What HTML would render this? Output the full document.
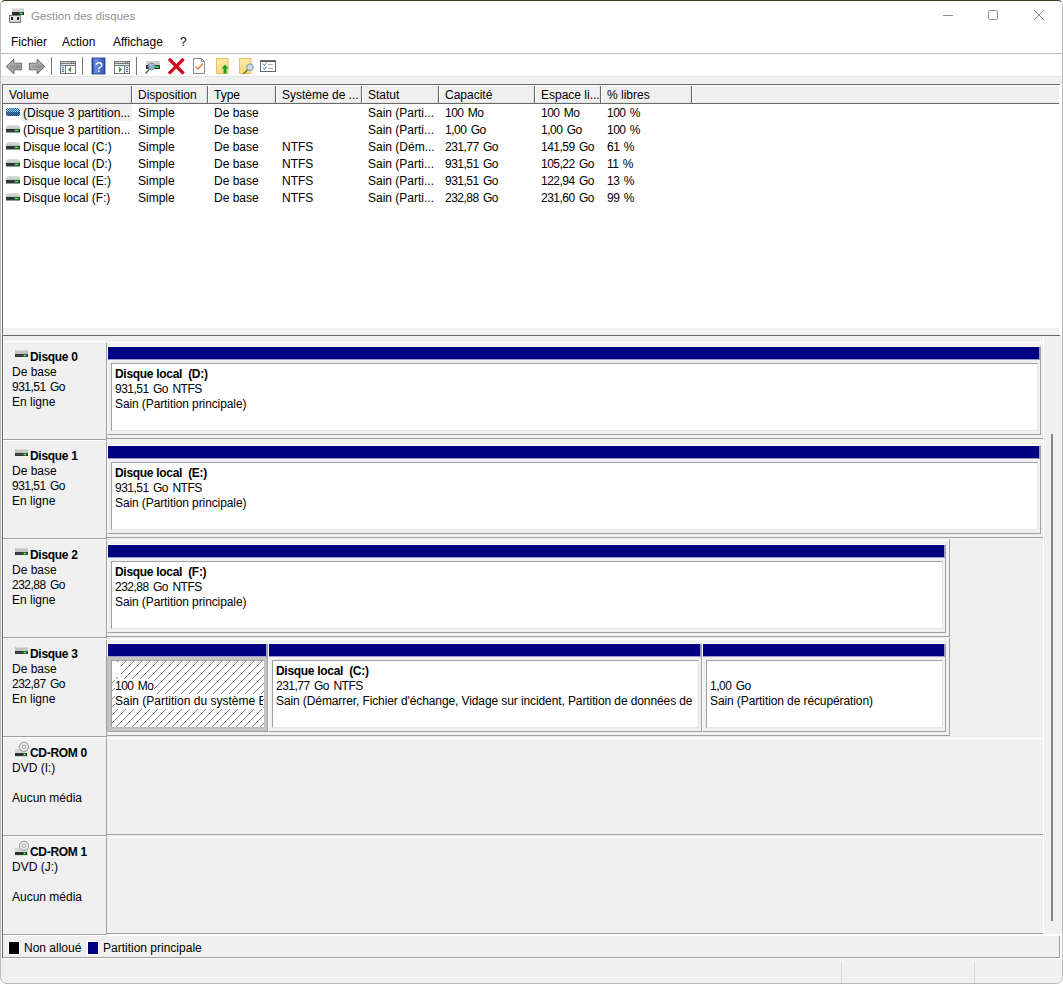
<!DOCTYPE html>
<html><head><meta charset="utf-8">
<style>
*{margin:0;padding:0;box-sizing:border-box}
html,body{width:1063px;height:984px;overflow:hidden;background:#fff}
body{position:relative;font-family:"Liberation Sans",sans-serif;font-size:12px;color:#000;line-height:15px}
.a{position:absolute}
.t{position:absolute;white-space:pre;line-height:15px}
.b{font-weight:bold;letter-spacing:-0.3px}
.n{letter-spacing:-0.5px;word-spacing:1.5px}
.hl{position:absolute;height:1px}
.vl{position:absolute;width:1px}
.ico-drv{width:14px;height:8px;background:linear-gradient(#dcdcdc 0,#c2c2c2 4px,#2e2e2e 4px,#3a3a3a 7px,#9a9a9a 7px);border-radius:3px 3px 0 0}
.ico-drv::after{content:"";position:absolute;left:9px;top:5px;width:3px;height:1px;background:#5fe26a;box-shadow:0 0 0 1px #1f6a28}
.ico-vol{width:14px;height:8px;background:linear-gradient(transparent 4px,rgba(10,50,110,.55) 4px),conic-gradient(#1f5c98 25%,#a6d8fc 0 50%,#1f5c98 0 75%,#a6d8fc 0);background-size:auto,2px 2px;border-radius:2px}
.bar{background:#000080;box-shadow:inset -1px -1px 0 #9a9ac8}
.hatch{border:4px solid #c3c3c3;background-color:#fff;background-image:repeating-linear-gradient(-45deg,transparent 0,transparent 4.6px,#8a8a8a 4.6px,#8a8a8a 5.66px)}
.ico-cd{width:15px;height:15px}
</style></head><body>
<!-- window frame -->
<div class="a" style="left:0;top:0;width:1063px;height:984px;background:#fff;border-top:1px solid #3b3627;border-left:1px solid #bdbdbd;border-right:1px solid #bdbdbd;border-bottom:1px solid #b8b8b8;border-radius:5px 5px 7px 7px"></div>
<!-- title icon -->
<svg class="a" style="left:8px;top:7px" width="18" height="17" viewBox="8 7 18 17" shape-rendering="crispEdges">
<rect x="12" y="8" width="12" height="4" fill="#d2d2d2"/>
<rect x="13" y="8" width="10" height="1" fill="#e8e8e8"/>
<rect x="12" y="12" width="12" height="3" fill="#2e2e2e"/>
<rect x="19" y="12" width="4" height="3" fill="#1d6e26"/>
<rect x="20" y="13" width="2" height="1" fill="#8cf08f"/>
<rect x="9" y="15" width="12" height="8" fill="#7a7a7a"/>
<rect x="10" y="16" width="10" height="6" fill="#e2e2e2"/>
<rect x="10" y="21" width="10" height="1" fill="#c8c8c8"/>
<rect x="11" y="17" width="2" height="3" fill="#1e1e1e"/>
<rect x="17" y="17" width="2" height="3" fill="#1e1e1e"/>
</svg>
<!-- window controls -->
<svg class="a" style="left:935px;top:5px" width="120" height="20" viewBox="935 5 120 20">
<rect x="943" y="15" width="10" height="1" fill="#8e8e8e" shape-rendering="crispEdges"/>
<rect x="988.5" y="10.5" width="9" height="9" rx="1.2" fill="none" stroke="#8e8e8e" stroke-width="1"/>
<path d="M1034 10 L1044 20 M1044 10 L1034 20" stroke="#8e8e8e" stroke-width="1"/>
</svg>
<!-- title -->
<div class="t" style="left:31px;top:9px;font-size:11.5px;color:#929292">Gestion des disques</div>

<!-- menu -->
<div class="t" style="left:11px;top:35px">Fichier</div>
<div class="t" style="left:62px;top:35px">Action</div>
<div class="t" style="left:113px;top:35px">Affichage</div>
<div class="t" style="left:180px;top:35px">?</div>
<div class="hl" style="left:1px;top:53px;width:1061px;background:#b8b8b8"></div>

<!-- toolbar icons -->
<svg class="a" style="left:0;top:54px" width="290" height="22" viewBox="0 54 290 22" shape-rendering="geometricPrecision">
<defs>
<linearGradient id="ag" x1="0" y1="0" x2="1" y2="1"><stop offset="0" stop-color="#b0b0b0"/><stop offset="1" stop-color="#7c7c7c"/></linearGradient>
<linearGradient id="hg" x1="0" y1="0" x2="1" y2="0"><stop offset="0" stop-color="#1d3f9c"/><stop offset="0.25" stop-color="#6f8fe0"/><stop offset="1" stop-color="#3556b8"/></linearGradient>
<linearGradient id="yg" x1="0" y1="0" x2="0" y2="1"><stop offset="0" stop-color="#fde9a8"/><stop offset="1" stop-color="#f9d978"/></linearGradient>
</defs>
<!-- back arrow -->
<path d="M6.2 66.5 L13.8 59.2 L13.8 63.2 L21.6 63.2 L21.6 69.8 L13.8 69.8 L13.8 73.8 Z" fill="url(#ag)" stroke="#606060" stroke-width="1" stroke-linejoin="round"/><path d="M7.9 66.5 L12.9 61.6 L12.9 64.1 L20.7 64.1 L20.7 68.9 L12.9 68.9 L12.9 71.4 Z" fill="none" stroke="#cfcfcf" stroke-width="0.7" stroke-linejoin="round" opacity="0.8"/>
<!-- forward arrow -->
<path d="M44.8 66.5 L37.2 59.2 L37.2 63.2 L29.4 63.2 L29.4 69.8 L37.2 69.8 L37.2 73.8 Z" fill="url(#ag)" stroke="#606060" stroke-width="1" stroke-linejoin="round"/><path d="M43.1 66.5 L38.1 61.6 L38.1 64.1 L30.3 64.1 L30.3 68.9 L38.1 68.9 L38.1 71.4 Z" fill="none" stroke="#cfcfcf" stroke-width="0.7" stroke-linejoin="round" opacity="0.8"/>
<!-- separators -->
<rect x="51" y="57" width="1" height="18" fill="#7a7a7a"/>
<rect x="82" y="57" width="1" height="18" fill="#7a7a7a"/>
<rect x="136" y="57" width="1" height="18" fill="#7a7a7a"/>
<!-- console tree icon -->
<g shape-rendering="crispEdges"><rect x="60" y="61" width="16" height="13" fill="#777"/><rect x="61" y="62" width="14" height="1" fill="#d4d4d4"/><rect x="71" y="62" width="1" height="1" fill="#777"/><rect x="73" y="62" width="1" height="1" fill="#777"/><rect x="61" y="64" width="14" height="1" fill="#dde3ea"/><rect x="61" y="66" width="4" height="7" fill="#e6f0fa"/><rect x="66" y="66" width="9" height="7" fill="#fbfffa"/><rect x="62" y="67" width="2" height="1" fill="#4f6a8a"/><rect x="62" y="69" width="2" height="1" fill="#4f6a8a"/><rect x="62" y="71" width="2" height="1" fill="#4f6a8a"/></g><path d="M68 69.5 L71 66.5 L71 72.5 Z" fill="#3c9a3c"/>
<!-- help -->
<rect x="92" y="58" width="13" height="16" fill="url(#hg)"/>
<rect x="92" y="58" width="13" height="16" fill="none" stroke="#1a3a8a" stroke-width="0.8"/>
<text x="99" y="72" font-family="Liberation Sans" font-size="14" fill="#fff" text-anchor="middle">?</text>
<!-- action pane icon -->
<g shape-rendering="crispEdges"><rect x="114" y="61" width="16" height="13" fill="#777"/><rect x="115" y="62" width="14" height="1" fill="#d4d4d4"/><rect x="125" y="62" width="1" height="1" fill="#777"/><rect x="127" y="62" width="1" height="1" fill="#777"/><rect x="115" y="64" width="14" height="1" fill="#dde3ea"/><rect x="125" y="66" width="4" height="7" fill="#e6f0fa"/><rect x="115" y="66" width="9" height="7" fill="#fbfffa"/><rect x="126" y="67" width="2" height="1" fill="#4f6a8a"/><rect x="126" y="69" width="2" height="1" fill="#4f6a8a"/><rect x="126" y="71" width="2" height="1" fill="#4f6a8a"/></g><path d="M122 69.5 L119 66.5 L119 72.5 Z" fill="#3c9a3c"/>
<!-- drive with magnifier -->
<rect x="146" y="61" width="14" height="4" rx="1" fill="#cfcfcf"/>
<rect x="146" y="65" width="14" height="4" fill="#333"/>
<rect x="155" y="66" width="4" height="2" fill="#2fc23a"/>
<line x1="145.5" y1="73.5" x2="149.5" y2="69" stroke="#555" stroke-width="1.2"/>
<circle cx="151.5" cy="66.5" r="3.3" fill="#a9c8e4" fill-opacity="0.85" stroke="#6a8aa8" stroke-width="1"/>
<!-- red X -->
<path d="M170 60 L182.5 72.5 M182.5 60 L170 72.5" stroke="#d3071a" stroke-width="3.2" stroke-linecap="square"/>
<!-- doc check -->
<path d="M193.5 58.5 L201.5 58.5 L204.5 61.5 L204.5 73.5 L193.5 73.5 Z" fill="#fff" stroke="#8a8a8a" stroke-width="1"/>
<path d="M201.5 58.5 L201.5 61.5 L204.5 61.5" fill="none" stroke="#8a8a8a" stroke-width="1"/>
<path d="M195.5 66.5 L198 69 L203 63.5" fill="none" stroke="#e8773d" stroke-width="1.4"/>
<!-- yellow doc with arrow -->
<rect x="216.5" y="58.5" width="11.5" height="15" fill="url(#yg)" stroke="#e6c35c" stroke-width="1"/>
<path d="M225 64.5 L228.5 68.5 L226.5 68.5 L226.5 73.5 L223.5 73.5 L223.5 68.5 L221.5 68.5 Z" fill="#1fa323"/>
<!-- yellow doc with magnifier -->
<rect x="239.5" y="58.5" width="11.5" height="15" fill="url(#yg)" stroke="#e6c35c" stroke-width="1"/>
<line x1="243.5" y1="73.8" x2="247.8" y2="69.5" stroke="#555" stroke-width="1.2"/>
<circle cx="250" cy="67.2" r="3.3" fill="#c9dde8" stroke="#7a9aac" stroke-width="1"/>
<!-- list checks -->
<g shape-rendering="crispEdges">
<rect x="260.5" y="60.5" width="15" height="11" fill="#fff" stroke="#6a6a6a"/>
<rect x="261" y="61" width="14" height="1" fill="#555"/>
<rect x="268" y="64" width="5" height="1" fill="#b0b0b0"/>
<rect x="268" y="68" width="5" height="1" fill="#b0b0b0"/>
</g>
<path d="M263 63.5 L264.5 65.5 L266.5 62.5 M263 67.5 L264.5 69.5 L266.5 66.5" fill="none" stroke="#3f7fd0" stroke-width="1"/>
</svg>

<!-- toolbar band -->
<div class="hl" style="left:1px;top:76px;width:1061px;background:#e3e3e3"></div>
<div class="a" style="left:1px;top:77px;width:1061px;height:7px;background:#f0f0f0"></div>

<!-- list view -->
<div class="a" style="left:2px;top:84px;width:1058px;height:251px;background:#fff;border-top:1px solid #696969;border-left:1px solid #696969"></div>
<div class="a" id="hdr" style="left:3px;top:85px;width:1056px;height:19px;background:#f0f0f0;border-bottom:1px solid #696969"></div>

<!-- list content -->
<div class="vl" style="left:131px;top:85px;height:18px;background:#696969"></div>
<div class="vl" style="left:207px;top:85px;height:18px;background:#696969"></div>
<div class="vl" style="left:275px;top:85px;height:18px;background:#696969"></div>
<div class="vl" style="left:361px;top:85px;height:18px;background:#696969"></div>
<div class="vl" style="left:438px;top:85px;height:18px;background:#696969"></div>
<div class="vl" style="left:534px;top:85px;height:18px;background:#696969"></div>
<div class="vl" style="left:600px;top:85px;height:18px;background:#696969"></div>
<div class="vl" style="left:691px;top:85px;height:18px;background:#696969"></div>
<div class="vl" style="left:3px;top:85px;height:18px;background:#fff"></div>
<div class="vl" style="left:132px;top:85px;height:18px;background:#fff"></div>
<div class="vl" style="left:208px;top:85px;height:18px;background:#fff"></div>
<div class="vl" style="left:276px;top:85px;height:18px;background:#fff"></div>
<div class="vl" style="left:362px;top:85px;height:18px;background:#fff"></div>
<div class="vl" style="left:439px;top:85px;height:18px;background:#fff"></div>
<div class="vl" style="left:535px;top:85px;height:18px;background:#fff"></div>
<div class="vl" style="left:601px;top:85px;height:18px;background:#fff"></div>
<div class="vl" style="left:692px;top:85px;height:18px;background:#fff"></div>
<div class="hl" style="left:3px;top:85px;width:1056px;background:#fff"></div>
<div class="hl" style="left:4px;top:102px;width:127px;background:#e3e3e3"></div>
<div class="vl" style="left:130px;top:86px;height:17px;background:#e3e3e3"></div>
<div class="hl" style="left:133px;top:102px;width:74px;background:#e3e3e3"></div>
<div class="vl" style="left:206px;top:86px;height:17px;background:#e3e3e3"></div>
<div class="hl" style="left:209px;top:102px;width:66px;background:#e3e3e3"></div>
<div class="vl" style="left:274px;top:86px;height:17px;background:#e3e3e3"></div>
<div class="hl" style="left:277px;top:102px;width:84px;background:#e3e3e3"></div>
<div class="vl" style="left:360px;top:86px;height:17px;background:#e3e3e3"></div>
<div class="hl" style="left:363px;top:102px;width:75px;background:#e3e3e3"></div>
<div class="vl" style="left:437px;top:86px;height:17px;background:#e3e3e3"></div>
<div class="hl" style="left:440px;top:102px;width:94px;background:#e3e3e3"></div>
<div class="vl" style="left:533px;top:86px;height:17px;background:#e3e3e3"></div>
<div class="hl" style="left:536px;top:102px;width:64px;background:#e3e3e3"></div>
<div class="vl" style="left:599px;top:86px;height:17px;background:#e3e3e3"></div>
<div class="hl" style="left:602px;top:102px;width:89px;background:#e3e3e3"></div>
<div class="vl" style="left:690px;top:86px;height:17px;background:#e3e3e3"></div>
<div class="t" style="left:9px;top:88px">Volume</div>
<div class="t" style="left:138px;top:88px">Disposition</div>
<div class="t" style="left:214px;top:88px">Type</div>
<div class="t" style="left:282px;top:88px">Système de ...</div>
<div class="t" style="left:368px;top:88px">Statut</div>
<div class="t" style="left:445px;top:88px">Capacité</div>
<div class="t" style="left:541px;top:88px">Espace li...</div>
<div class="t" style="left:607px;top:88px">% libres</div>
<div class="a" style="left:21px;top:104px;width:111px;height:17px;background:#f0f0f0"></div>
<div class="t" style="left:23px;top:106px">(Disque 3 partition...</div>
<div class="t" style="left:138px;top:106px">Simple</div>
<div class="t" style="left:214px;top:106px">De base</div>
<div class="t" style="left:368px;top:106px">Sain (Parti...</div>
<div class="t n" style="left:445px;top:106px">100 Mo</div>
<div class="t n" style="left:541px;top:106px">100 Mo</div>
<div class="t n" style="left:607px;top:106px">100 %</div>
<div class="a ico-vol" style="left:6px;top:108px"></div>
<div class="t" style="left:23px;top:123px">(Disque 3 partition...</div>
<div class="t" style="left:138px;top:123px">Simple</div>
<div class="t" style="left:214px;top:123px">De base</div>
<div class="t" style="left:368px;top:123px">Sain (Parti...</div>
<div class="t n" style="left:445px;top:123px">1,00 Go</div>
<div class="t n" style="left:541px;top:123px">1,00 Go</div>
<div class="t n" style="left:607px;top:123px">100 %</div>
<div class="a ico-drv" style="left:6px;top:125px"></div>
<div class="t" style="left:23px;top:140px">Disque local (C:)</div>
<div class="t" style="left:138px;top:140px">Simple</div>
<div class="t" style="left:214px;top:140px">De base</div>
<div class="t" style="left:282px;top:140px">NTFS</div>
<div class="t" style="left:368px;top:140px">Sain (Dém...</div>
<div class="t n" style="left:445px;top:140px">231,77 Go</div>
<div class="t n" style="left:541px;top:140px">141,59 Go</div>
<div class="t n" style="left:607px;top:140px">61 %</div>
<div class="a ico-drv" style="left:6px;top:142px"></div>
<div class="t" style="left:23px;top:157px">Disque local (D:)</div>
<div class="t" style="left:138px;top:157px">Simple</div>
<div class="t" style="left:214px;top:157px">De base</div>
<div class="t" style="left:282px;top:157px">NTFS</div>
<div class="t" style="left:368px;top:157px">Sain (Parti...</div>
<div class="t n" style="left:445px;top:157px">931,51 Go</div>
<div class="t n" style="left:541px;top:157px">105,22 Go</div>
<div class="t n" style="left:607px;top:157px">11 %</div>
<div class="a ico-drv" style="left:6px;top:159px"></div>
<div class="t" style="left:23px;top:174px">Disque local (E:)</div>
<div class="t" style="left:138px;top:174px">Simple</div>
<div class="t" style="left:214px;top:174px">De base</div>
<div class="t" style="left:282px;top:174px">NTFS</div>
<div class="t" style="left:368px;top:174px">Sain (Parti...</div>
<div class="t n" style="left:445px;top:174px">931,51 Go</div>
<div class="t n" style="left:541px;top:174px">122,94 Go</div>
<div class="t n" style="left:607px;top:174px">13 %</div>
<div class="a ico-drv" style="left:6px;top:176px"></div>
<div class="t" style="left:23px;top:191px">Disque local (F:)</div>
<div class="t" style="left:138px;top:191px">Simple</div>
<div class="t" style="left:214px;top:191px">De base</div>
<div class="t" style="left:282px;top:191px">NTFS</div>
<div class="t" style="left:368px;top:191px">Sain (Parti...</div>
<div class="t n" style="left:445px;top:191px">232,88 Go</div>
<div class="t n" style="left:541px;top:191px">231,60 Go</div>
<div class="t n" style="left:607px;top:191px">99 %</div>
<div class="a ico-drv" style="left:6px;top:193px"></div>
<div class="a" style="left:3px;top:328px;width:1056px;height:7px;background:#f0f0f0"></div>
<div class="hl" style="left:3px;top:331px;width:1056px;background:#fff"></div>
<!-- graph area -->
<div class="a" style="left:1px;top:335px;width:1061px;height:599px;background:#f0f0f0"></div>
<div class="hl" style="left:2px;top:335px;width:1058px;background:#696969"></div>
<div class="vl" style="left:2px;top:84px;height:874px;background:#696969"></div>
<div class="vl" style="left:1043px;top:336px;height:598px;background:#fff"></div>
<div class="vl" style="left:3px;top:336px;height:598px;background:#fff"></div>
<div class="a" style="left:1051px;top:434px;width:2px;height:487px;background:#858585"></div>
<div class="hl" style="left:3px;top:341px;width:102px;background:#fff"></div>
<div class="hl" style="left:3px;top:439px;width:104px;background:#a0a0a0"></div>
<div class="vl" style="left:106px;top:343px;height:98px;background:#a0a0a0"></div>
<svg class="a" style="left:15px;top:350px" width="13" height="7" viewBox="0 0 13 7" shape-rendering="crispEdges"><rect x="0" y="0" width="13" height="4" fill="#c4c4c4"/><rect x="1" y="0" width="11" height="1" fill="#d8d8d8"/><rect x="0" y="4" width="13" height="3" fill="#333"/><rect x="1" y="5" width="7" height="1" fill="#505050"/><rect x="8" y="4" width="4" height="3" fill="#1f6a28"/><rect x="9" y="5" width="2" height="1" fill="#7dec84"/></svg>
<div class="t b" style="left:30px;top:350px">Disque 0</div>
<div class="t" style="left:12px;top:365px">De base</div>
<div class="t n" style="left:12px;top:380px">931,51 Go</div>
<div class="t" style="left:12px;top:395px">En ligne</div>
<div class="hl" style="left:107px;top:342px;width:936px;background:#fff"></div>
<div class="hl" style="left:107px;top:438px;width:936px;background:#a0a0a0"></div>
<div class="a" style="left:107px;top:346px;width:934px;height:89px;border-top:1px solid #fff;border-left:1px solid #fff;border-right:1px solid #a0a0a0;border-bottom:1px solid #a0a0a0"></div>
<div class="a bar" style="left:108px;top:347px;width:932px;height:13px"></div>
<div class="a" style="left:111px;top:363px;width:927px;height:68px;background:#fff;border-top:1px solid #a0a0a0;border-left:1px solid #a0a0a0;border-right:1px solid #e6e6e6;border-bottom:1px solid #e6e6e6"></div>
<div class="t b" style="left:115px;top:367px;width:921px;overflow:hidden">Disque local  (D:)</div>
<div class="t n" style="left:115px;top:382px;width:921px;overflow:hidden">931,51 Go NTFS</div>
<div class="t" style="left:115px;top:397px;width:921px;overflow:hidden;letter-spacing:-0.1px">Sain (Partition principale)</div>
<div class="hl" style="left:3px;top:440px;width:102px;background:#fff"></div>
<div class="hl" style="left:3px;top:538px;width:104px;background:#a0a0a0"></div>
<div class="vl" style="left:106px;top:442px;height:98px;background:#a0a0a0"></div>
<svg class="a" style="left:15px;top:449px" width="13" height="7" viewBox="0 0 13 7" shape-rendering="crispEdges"><rect x="0" y="0" width="13" height="4" fill="#c4c4c4"/><rect x="1" y="0" width="11" height="1" fill="#d8d8d8"/><rect x="0" y="4" width="13" height="3" fill="#333"/><rect x="1" y="5" width="7" height="1" fill="#505050"/><rect x="8" y="4" width="4" height="3" fill="#1f6a28"/><rect x="9" y="5" width="2" height="1" fill="#7dec84"/></svg>
<div class="t b" style="left:30px;top:449px">Disque 1</div>
<div class="t" style="left:12px;top:464px">De base</div>
<div class="t n" style="left:12px;top:479px">931,51 Go</div>
<div class="t" style="left:12px;top:494px">En ligne</div>
<div class="hl" style="left:107px;top:441px;width:936px;background:#fff"></div>
<div class="hl" style="left:107px;top:537px;width:936px;background:#a0a0a0"></div>
<div class="a" style="left:107px;top:445px;width:934px;height:89px;border-top:1px solid #fff;border-left:1px solid #fff;border-right:1px solid #a0a0a0;border-bottom:1px solid #a0a0a0"></div>
<div class="a bar" style="left:108px;top:446px;width:932px;height:13px"></div>
<div class="a" style="left:111px;top:462px;width:927px;height:68px;background:#fff;border-top:1px solid #a0a0a0;border-left:1px solid #a0a0a0;border-right:1px solid #e6e6e6;border-bottom:1px solid #e6e6e6"></div>
<div class="t b" style="left:115px;top:466px;width:921px;overflow:hidden">Disque local  (E:)</div>
<div class="t n" style="left:115px;top:481px;width:921px;overflow:hidden">931,51 Go NTFS</div>
<div class="t" style="left:115px;top:496px;width:921px;overflow:hidden;letter-spacing:-0.1px">Sain (Partition principale)</div>
<div class="hl" style="left:3px;top:539px;width:102px;background:#fff"></div>
<div class="hl" style="left:3px;top:637px;width:104px;background:#a0a0a0"></div>
<div class="vl" style="left:106px;top:541px;height:98px;background:#a0a0a0"></div>
<svg class="a" style="left:15px;top:548px" width="13" height="7" viewBox="0 0 13 7" shape-rendering="crispEdges"><rect x="0" y="0" width="13" height="4" fill="#c4c4c4"/><rect x="1" y="0" width="11" height="1" fill="#d8d8d8"/><rect x="0" y="4" width="13" height="3" fill="#333"/><rect x="1" y="5" width="7" height="1" fill="#505050"/><rect x="8" y="4" width="4" height="3" fill="#1f6a28"/><rect x="9" y="5" width="2" height="1" fill="#7dec84"/></svg>
<div class="t b" style="left:30px;top:548px">Disque 2</div>
<div class="t" style="left:12px;top:563px">De base</div>
<div class="t n" style="left:12px;top:578px">232,88 Go</div>
<div class="t" style="left:12px;top:593px">En ligne</div>
<div class="hl" style="left:107px;top:540px;width:842px;background:#fff"></div>
<div class="hl" style="left:107px;top:636px;width:842px;background:#a0a0a0"></div>
<div class="vl" style="left:949px;top:539px;height:98px;background:#a0a0a0"></div>
<div class="a" style="left:107px;top:544px;width:839px;height:89px;border-top:1px solid #fff;border-left:1px solid #fff;border-right:1px solid #a0a0a0;border-bottom:1px solid #a0a0a0"></div>
<div class="a bar" style="left:108px;top:545px;width:837px;height:13px"></div>
<div class="a" style="left:111px;top:561px;width:832px;height:68px;background:#fff;border-top:1px solid #a0a0a0;border-left:1px solid #a0a0a0;border-right:1px solid #e6e6e6;border-bottom:1px solid #e6e6e6"></div>
<div class="t b" style="left:115px;top:565px;width:826px;overflow:hidden">Disque local  (F:)</div>
<div class="t n" style="left:115px;top:580px;width:826px;overflow:hidden">232,88 Go NTFS</div>
<div class="t" style="left:115px;top:595px;width:826px;overflow:hidden;letter-spacing:-0.1px">Sain (Partition principale)</div>
<div class="hl" style="left:3px;top:638px;width:102px;background:#fff"></div>
<div class="hl" style="left:3px;top:736px;width:104px;background:#a0a0a0"></div>
<div class="vl" style="left:106px;top:640px;height:98px;background:#a0a0a0"></div>
<svg class="a" style="left:15px;top:647px" width="13" height="7" viewBox="0 0 13 7" shape-rendering="crispEdges"><rect x="0" y="0" width="13" height="4" fill="#c4c4c4"/><rect x="1" y="0" width="11" height="1" fill="#d8d8d8"/><rect x="0" y="4" width="13" height="3" fill="#333"/><rect x="1" y="5" width="7" height="1" fill="#505050"/><rect x="8" y="4" width="4" height="3" fill="#1f6a28"/><rect x="9" y="5" width="2" height="1" fill="#7dec84"/></svg>
<div class="t b" style="left:30px;top:647px">Disque 3</div>
<div class="t" style="left:12px;top:662px">De base</div>
<div class="t n" style="left:12px;top:677px">232,87 Go</div>
<div class="t" style="left:12px;top:692px">En ligne</div>
<div class="hl" style="left:107px;top:639px;width:842px;background:#fff"></div>
<div class="hl" style="left:107px;top:735px;width:842px;background:#a0a0a0"></div>
<div class="vl" style="left:949px;top:638px;height:98px;background:#a0a0a0"></div>
<div class="a" style="left:107px;top:643px;width:161px;height:89px;border-top:1px solid #fff;border-left:1px solid #fff;border-right:1px solid #a0a0a0;border-bottom:1px solid #a0a0a0"></div>
<div class="a bar" style="left:108px;top:644px;width:159px;height:13px"></div>
<div class="a" style="left:107px;top:657px;width:160px;height:74px;background:#c3c3c3"></div>
<div class="a" style="left:111px;top:660px;width:153px;height:67px;border-top:1px solid #a0a0a0;border-left:1px solid #a0a0a0;background:#fff"></div>
<svg class="a" style="left:112px;top:661px" width="152" height="66" shape-rendering="crispEdges"><defs><pattern id="hp" width="8" height="8" patternUnits="userSpaceOnUse"><g fill="#858585"><rect x="0" y="5" width="1" height="1"/><rect x="1" y="4" width="1" height="1"/><rect x="2" y="3" width="1" height="1"/><rect x="3" y="2" width="1" height="1"/><rect x="4" y="1" width="1" height="1"/><rect x="5" y="0" width="1" height="1"/><rect x="6" y="7" width="1" height="1"/><rect x="7" y="6" width="1" height="1"/></g></pattern></defs><rect width="152" height="66" fill="url(#hp)"/></svg>
<div class="a" style="left:112px;top:662px;width:9px;height:15px;background:#fff"></div>
<div class="t" style="left:115px;top:679px;width:148px;overflow:hidden"><span class="n" style="background:#fff;display:inline-block;height:15px;padding-left:3px;margin-left:-3px">100 Mo</span></div>
<div class="t" style="left:115px;top:694px;width:148px;overflow:hidden"><span style="background:#fff;display:inline-block;height:15px;padding-left:3px;margin-left:-3px">Sain (Partition du système EFI)</span></div>
<div class="a" style="left:268px;top:643px;width:434px;height:89px;border-top:1px solid #fff;border-left:1px solid #fff;border-right:1px solid #a0a0a0;border-bottom:1px solid #a0a0a0"></div>
<div class="a bar" style="left:269px;top:644px;width:432px;height:13px"></div>
<div class="a" style="left:272px;top:660px;width:427px;height:68px;background:#fff;border-top:1px solid #a0a0a0;border-left:1px solid #a0a0a0;border-right:1px solid #e6e6e6;border-bottom:1px solid #e6e6e6"></div>
<div class="t b" style="left:276px;top:664px;width:417px;overflow:hidden">Disque local  (C:)</div>
<div class="t n" style="left:276px;top:679px;width:417px;overflow:hidden">231,77 Go NTFS</div>
<div class="t" style="left:276px;top:694px;width:417px;overflow:hidden;letter-spacing:-0.1px">Sain (Démarrer, Fichier d'échange, Vidage sur incident, Partition de données de base)</div>
<div class="a" style="left:702px;top:643px;width:244px;height:89px;border-top:1px solid #fff;border-left:1px solid #fff;border-right:1px solid #a0a0a0;border-bottom:1px solid #a0a0a0"></div>
<div class="a bar" style="left:703px;top:644px;width:242px;height:13px"></div>
<div class="a" style="left:706px;top:660px;width:237px;height:68px;background:#fff;border-top:1px solid #a0a0a0;border-left:1px solid #a0a0a0;border-right:1px solid #e6e6e6;border-bottom:1px solid #e6e6e6"></div>
<div class="t n" style="left:710px;top:679px;width:231px;overflow:hidden">1,00 Go</div>
<div class="t" style="left:710px;top:694px;width:231px;overflow:hidden;letter-spacing:-0.1px">Sain (Partition de récupération)</div>
<div class="hl" style="left:3px;top:737px;width:102px;background:#fff"></div>
<div class="hl" style="left:3px;top:835px;width:104px;background:#a0a0a0"></div>
<div class="vl" style="left:106px;top:739px;height:98px;background:#a0a0a0"></div>
<svg class="a" style="left:14px;top:740px" width="15" height="17" viewBox="0 0 15 17"><rect x="1" y="9" width="13" height="8" fill="#d6d6d6"/><circle cx="10" cy="6.8" r="4.6" fill="#e3e7ea" stroke="#9a9a9a" stroke-width="1"/><circle cx="10" cy="6.8" r="1.6" fill="#fff" stroke="#a0a0a0" stroke-width="1"/><g shape-rendering="crispEdges"><rect x="1" y="13" width="12" height="3" fill="#2f2f2f"/><rect x="9" y="13" width="3" height="3" fill="#1f7a2a"/><rect x="10" y="14" width="1" height="1" fill="#8af08f"/></g></svg>
<div class="t b" style="left:30px;top:746px">CD-ROM 0</div>
<div class="t" style="left:12px;top:761px">DVD (I:)</div>
<div class="t" style="left:12px;top:791px">Aucun média</div>
<div class="hl" style="left:107px;top:738px;width:936px;background:#fff"></div>
<div class="hl" style="left:107px;top:834px;width:936px;background:#a0a0a0"></div>
<div class="hl" style="left:3px;top:836px;width:102px;background:#fff"></div>
<div class="hl" style="left:3px;top:934px;width:104px;background:#a0a0a0"></div>
<div class="vl" style="left:106px;top:838px;height:98px;background:#a0a0a0"></div>
<svg class="a" style="left:14px;top:839px" width="15" height="17" viewBox="0 0 15 17"><rect x="1" y="9" width="13" height="8" fill="#d6d6d6"/><circle cx="10" cy="6.8" r="4.6" fill="#e3e7ea" stroke="#9a9a9a" stroke-width="1"/><circle cx="10" cy="6.8" r="1.6" fill="#fff" stroke="#a0a0a0" stroke-width="1"/><g shape-rendering="crispEdges"><rect x="1" y="13" width="12" height="3" fill="#2f2f2f"/><rect x="9" y="13" width="3" height="3" fill="#1f7a2a"/><rect x="10" y="14" width="1" height="1" fill="#8af08f"/></g></svg>
<div class="t b" style="left:30px;top:845px">CD-ROM 1</div>
<div class="t" style="left:12px;top:860px">DVD (J:)</div>
<div class="t" style="left:12px;top:890px">Aucun média</div>
<div class="hl" style="left:107px;top:837px;width:936px;background:#fff"></div>
<div class="hl" style="left:107px;top:933px;width:936px;background:#a0a0a0"></div>
<!-- legend -->
<div class="a" style="left:3px;top:935px;width:1057px;height:23px;background:#f0f0f0;border-top:1px solid #fff;border-right:1px solid #a0a0a0;border-bottom:1px solid #a0a0a0"></div>
<div class="a" style="left:8px;top:941px;width:12px;height:14px;background:#000;border:1px solid #fff"></div>
<div class="t" style="left:24px;top:941px">Non alloué</div>
<div class="a" style="left:87px;top:941px;width:12px;height:14px;background:#000080;border:1px solid #fff"></div>
<div class="t" style="left:103px;top:941px">Partition principale</div>
<!-- status bar -->
<div class="a" style="left:1px;top:958px;width:1061px;height:25px;background:#f0f0f0;border-radius:0 0 8px 8px"></div>
<div class="hl" style="left:1px;top:958px;width:1061px;background:#fff"></div>
<div class="vl" style="left:841px;top:962px;height:21px;background:#dadada"></div>
<div class="vl" style="left:974px;top:962px;height:21px;background:#dadada"></div>

</body></html>
